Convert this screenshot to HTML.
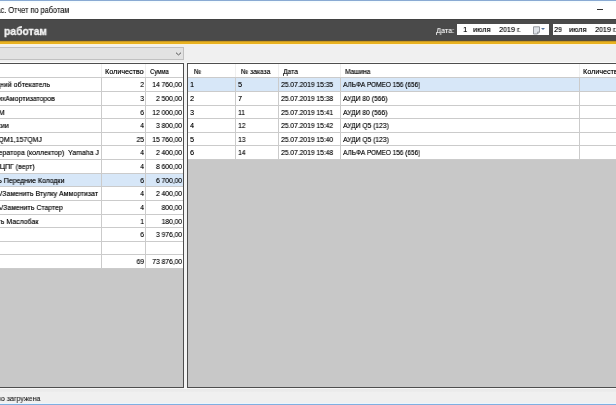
<!DOCTYPE html>
<html><head><meta charset="utf-8"><style>
*{margin:0;padding:0;box-sizing:border-box}
html,body{-webkit-font-smoothing:antialiased;width:616px;height:405px;overflow:hidden;background:#f0f0f0;font-family:"Liberation Sans",sans-serif;color:#1a1a1a}
div,span{position:absolute}
span{will-change:transform}
.t{color:#000;text-shadow:0.3px 0 0 rgba(0,0,0,0.5);font-size:7.2px;white-space:pre;line-height:10px;transform:scaleX(0.93);transform-origin:0 0}
.r{text-align:right;transform-origin:100% 0}
.hl{height:1px}
.vl{width:1px}
</style></head><body>

<div style="left:0;top:0;width:616px;height:1px;background:#8aaad3"></div>
<div style="left:0;top:1px;width:616px;height:18px;background:#ffffff"></div>
<div style="left:0;top:1px;width:616px;height:2px;background:linear-gradient(#f3fcff,#fafeff)"></div>
<span style="right:546.4px;top:5px;font-size:8.5px;transform:scaleX(0.865);transform-origin:100% 0;white-space:pre;line-height:10px;color:#111;text-shadow:0.2px 0 0 rgba(0,0,0,0.4)">ас. Отчет по работам</span>
<div style="left:597px;top:9px;width:6px;height:1px;background:#333"></div>
<div style="left:0;top:19px;width:616px;height:22px;background:#4a4a4a"></div>
<div style="left:0;top:19px;width:616px;height:1px;background:#424242"></div>
<span style="left:3.6px;top:23.9px;font-size:11.5px;font-weight:bold;-webkit-text-stroke:0.3px #f4f4f4;transform:scaleX(0.9);transform-origin:0 0;white-space:pre;line-height:14px;color:#f4f4f4">работам</span>
<span style="left:435.5px;top:26px;font-size:8px;transform:scaleX(0.91);transform-origin:0 0;white-space:pre;line-height:10px;color:#f2f2f2;text-shadow:0.3px 0 0 rgba(240,240,240,0.5)">Дата:</span>
<div style="left:457px;top:24px;width:92px;height:11.3px;background:#fff"></div>
<span class="t" style="left:462.5px;top:25px;font-size:7.7px">1</span>
<span class="t" style="left:472.5px;top:25px;font-size:7.7px">июля</span>
<span class="t" style="left:498.5px;top:25px;font-size:7.7px">2019 г.</span>
<svg style="position:absolute;left:532px;top:26px" width="9" height="9" viewBox="0 0 9 9"><path d="M1.5 0.8 H7.5 V6 L5.5 8 H1.5 Z" fill="#dfe3e8" stroke="#8c9096" stroke-width="0.9"/><path d="M7.5 6 H5.5 V8" fill="none" stroke="#8c9096" stroke-width="0.7"/></svg>
<div style="left:541px;top:28.3px;width:0;height:0;border-left:2.4px solid transparent;border-right:2.4px solid transparent;border-top:2.8px solid #4f6f9c"></div>
<div style="left:553px;top:24px;width:70px;height:11.3px;background:#fff"></div>
<span class="t" style="left:554px;top:25px;font-size:7.7px">29</span>
<span class="t" style="left:569px;top:25px;font-size:7.7px">июля</span>
<span class="t" style="left:594.5px;top:25px;font-size:7.7px">2019 г.</span>
<div style="left:0;top:40px;width:616px;height:1px;background:#5a4f36"></div>
<div style="left:0;top:41px;width:616px;height:1px;background:#c99a22"></div>
<div style="left:0;top:42px;width:616px;height:2px;background:#e9b220"></div>
<div style="left:0;top:44px;width:616px;height:1px;background:#fbf3dc"></div>
<div style="left:-2px;top:47px;width:186px;height:13px;background:#e2e2e2;border:1px solid #c0c0c0"></div>
<svg style="position:absolute;left:175px;top:51px" width="7" height="5" viewBox="0 0 7 5"><path d="M1 1.7 L3.2 3.7 Q3.5 4 3.8 3.7 L6 1.7" fill="none" stroke="#555" stroke-width="1"/></svg>
<div style="left:0;top:62px;width:616px;height:1px;background:#fbfbfb"></div>
<div style="left:184px;top:62px;width:3px;height:326px;background:#f4f4f4"></div>
<div style="left:-2px;top:63px;width:186px;height:325px;background:#c8c8c8;border:1px solid #4e4e4e"></div>
<div style="left:0;top:64px;width:183px;height:13.30px;background:#fff"></div>
<div style="left:0;top:77.30px;width:183px;height:190.82px;background:#fff"></div>
<div style="left:0;top:172.71px;width:183px;height:13.63px;background:#d7e7f8"></div>
<div class="hl" style="left:0;top:77.30px;width:183px;background:#cbcbcb"></div>
<div class="hl" style="left:0;top:90.93px;width:183px;background:#cbcbcb"></div>
<div class="hl" style="left:0;top:104.56px;width:183px;background:#cbcbcb"></div>
<div class="hl" style="left:0;top:118.19px;width:183px;background:#cbcbcb"></div>
<div class="hl" style="left:0;top:131.82px;width:183px;background:#cbcbcb"></div>
<div class="hl" style="left:0;top:145.45px;width:183px;background:#cbcbcb"></div>
<div class="hl" style="left:0;top:159.08px;width:183px;background:#cbcbcb"></div>
<div class="hl" style="left:0;top:172.71px;width:183px;background:#cbcbcb"></div>
<div class="hl" style="left:0;top:186.34px;width:183px;background:#cbcbcb"></div>
<div class="hl" style="left:0;top:199.97px;width:183px;background:#cbcbcb"></div>
<div class="hl" style="left:0;top:213.60px;width:183px;background:#cbcbcb"></div>
<div class="hl" style="left:0;top:227.23px;width:183px;background:#cbcbcb"></div>
<div class="hl" style="left:0;top:240.86px;width:183px;background:#cbcbcb"></div>
<div class="hl" style="left:0;top:254.49px;width:183px;background:#cbcbcb"></div>
<div class="hl" style="left:0;top:268.12px;width:183px;background:#cbcbcb"></div>
<div class="vl" style="left:101px;top:64px;height:13.30px;background:#efefef"></div>
<div class="vl" style="left:145px;top:64px;height:13.30px;background:#efefef"></div>
<div class="vl" style="left:101px;top:77.30px;height:190.82px;background:#cbcbcb"></div>
<div class="vl" style="left:145px;top:77.30px;height:190.82px;background:#cbcbcb"></div>
<span class="t" style="left:105.2px;top:66.5px;transform:scaleX(1.0)">Количество</span>
<span class="t" style="left:149.7px;top:66.5px;transform:scaleX(0.83)">Сумма</span>
<span class="t r" style="right:566.0px;top:80.30px;transform:scaleX(0.97)">Задний обтекатель</span>
<span class="t r" style="right:471.7px;top:80.30px">2</span>
<span class="t r" style="right:434.2px;top:80.30px">14 760,00</span>
<span class="t r" style="right:560.8px;top:93.93px;transform:scaleX(0.97)">ПереднихАмортизаторов</span>
<span class="t r" style="right:471.7px;top:93.93px">3</span>
<span class="t r" style="right:434.2px;top:93.93px">2 500,00</span>
<span class="t r" style="right:611.1px;top:107.56px;transform:scaleX(0.97)">ГРМ</span>
<span class="t r" style="right:471.7px;top:107.56px">6</span>
<span class="t r" style="right:434.2px;top:107.56px">12 000,00</span>
<span class="t r" style="right:607.1px;top:121.19px;transform:scaleX(0.97)">Трансмиссии</span>
<span class="t r" style="right:471.7px;top:121.19px">4</span>
<span class="t r" style="right:434.2px;top:121.19px">3 800,00</span>
<span class="t r" style="right:573.8px;top:134.82px;transform:scaleX(0.97)">Мотор 152QM1,157QMJ</span>
<span class="t r" style="right:471.7px;top:134.82px">25</span>
<span class="t r" style="right:434.2px;top:134.82px">15 760,00</span>
<span class="t r" style="right:517.2px;top:148.45px;transform:scaleX(0.97)">Щетки генератора (коллектор)  Yamaha J</span>
<span class="t r" style="right:471.7px;top:148.45px">4</span>
<span class="t r" style="right:434.2px;top:148.45px">2 400,00</span>
<span class="t r" style="right:581.2px;top:162.08px;transform:scaleX(0.97)">Поршень ЦПГ (верт)</span>
<span class="t r" style="right:471.7px;top:162.08px">4</span>
<span class="t r" style="right:434.2px;top:162.08px">8 600,00</span>
<span class="t r" style="right:551.4px;top:175.71px;transform:scaleX(0.97)">Снять/Установить Передние Колодки</span>
<span class="t r" style="right:471.7px;top:175.71px">6</span>
<span class="t r" style="right:434.2px;top:175.71px">6 700,00</span>
<span class="t r" style="right:518.1px;top:189.34px;transform:scaleX(0.97)">Снять/Заменить Втулку Аммортизат</span>
<span class="t r" style="right:471.7px;top:189.34px">4</span>
<span class="t r" style="right:434.2px;top:189.34px">2 400,00</span>
<span class="t r" style="right:553.5px;top:202.97px;transform:scaleX(0.97)">Снять/Заменить Стартер</span>
<span class="t r" style="right:471.7px;top:202.97px">4</span>
<span class="t r" style="right:434.2px;top:202.97px">800,00</span>
<span class="t r" style="right:577.5px;top:216.60px;transform:scaleX(0.97)">Заменить Маслобак</span>
<span class="t r" style="right:471.7px;top:216.60px">1</span>
<span class="t r" style="right:434.2px;top:216.60px">180,00</span>
<span class="t r" style="right:471.7px;top:230.23px">6</span>
<span class="t r" style="right:434.2px;top:230.23px">3 976,00</span>
<span class="t r" style="right:471.7px;top:257.49px">69</span>
<span class="t r" style="right:434.2px;top:257.49px">73 876,00</span>
<div style="left:187px;top:63px;width:440px;height:325px;background:#c8c8c8;border:1px solid #4e4e4e"></div>
<div style="left:188px;top:64px;width:430px;height:13.30px;background:#fff"></div>
<div style="left:188px;top:77.30px;width:430px;height:81.78px;background:#fff"></div>
<div style="left:188px;top:77.30px;width:430px;height:13.63px;background:#d7e7f8"></div>
<div class="hl" style="left:188px;top:77.30px;width:430px;background:#cbcbcb"></div>
<div class="hl" style="left:188px;top:90.93px;width:430px;background:#cbcbcb"></div>
<div class="hl" style="left:188px;top:104.56px;width:430px;background:#cbcbcb"></div>
<div class="hl" style="left:188px;top:118.19px;width:430px;background:#cbcbcb"></div>
<div class="hl" style="left:188px;top:131.82px;width:430px;background:#cbcbcb"></div>
<div class="hl" style="left:188px;top:145.45px;width:430px;background:#cbcbcb"></div>
<div class="hl" style="left:188px;top:159.08px;width:430px;background:#cbcbcb"></div>
<div class="vl" style="left:235px;top:64px;height:13.30px;background:#efefef"></div>
<div class="vl" style="left:235px;top:77.30px;height:81.78px;background:#cbcbcb"></div>
<div class="vl" style="left:278px;top:64px;height:13.30px;background:#efefef"></div>
<div class="vl" style="left:278px;top:77.30px;height:81.78px;background:#cbcbcb"></div>
<div class="vl" style="left:340px;top:64px;height:13.30px;background:#efefef"></div>
<div class="vl" style="left:340px;top:77.30px;height:81.78px;background:#cbcbcb"></div>
<div class="vl" style="left:579px;top:64px;height:13.30px;background:#efefef"></div>
<div class="vl" style="left:579px;top:77.30px;height:81.78px;background:#cbcbcb"></div>
<span class="t" style="left:193.7px;top:66.5px;transform:scaleX(0.93)">№</span>
<span class="t" style="left:240.5px;top:66.5px;transform:scaleX(0.93)">№ заказа</span>
<span class="t" style="left:283.2px;top:66.5px;transform:scaleX(0.93)">Дата</span>
<span class="t" style="left:344.5px;top:66.5px;transform:scaleX(0.91)">Машина</span>
<span class="t" style="left:583.3px;top:66.5px;transform:scaleX(1.0)">Количество</span>
<span class="t" style="left:189.5px;top:80.30px">1</span>
<span class="t" style="left:237.5px;top:80.30px">5</span>
<span class="t" style="left:280.8px;top:80.30px">25.07.2019 15:35</span>
<span class="t" style="left:342.5px;top:80.30px;transform:scaleX(0.9)">АЛЬФА РОМЕО 156 (656)</span>
<span class="t" style="left:189.5px;top:93.93px">2</span>
<span class="t" style="left:237.5px;top:93.93px">7</span>
<span class="t" style="left:280.8px;top:93.93px">25.07.2019 15:38</span>
<span class="t" style="left:342.5px;top:93.93px">АУДИ 80 (566)</span>
<span class="t" style="left:189.5px;top:107.56px">3</span>
<span class="t" style="left:237.5px;top:107.56px">11</span>
<span class="t" style="left:280.8px;top:107.56px">25.07.2019 15:41</span>
<span class="t" style="left:342.5px;top:107.56px">АУДИ 80 (566)</span>
<span class="t" style="left:189.5px;top:121.19px">4</span>
<span class="t" style="left:237.5px;top:121.19px">12</span>
<span class="t" style="left:280.8px;top:121.19px">25.07.2019 15:42</span>
<span class="t" style="left:342.5px;top:121.19px">АУДИ Q5 (123)</span>
<span class="t" style="left:189.5px;top:134.82px">5</span>
<span class="t" style="left:237.5px;top:134.82px">13</span>
<span class="t" style="left:280.8px;top:134.82px">25.07.2019 15:40</span>
<span class="t" style="left:342.5px;top:134.82px">АУДИ Q5 (123)</span>
<span class="t" style="left:189.5px;top:148.45px">6</span>
<span class="t" style="left:237.5px;top:148.45px">14</span>
<span class="t" style="left:280.8px;top:148.45px">25.07.2019 15:48</span>
<span class="t" style="left:342.5px;top:148.45px;transform:scaleX(0.9)">АЛЬФА РОМЕО 156 (656)</span>
<div style="left:0;top:388px;width:616px;height:1px;background:#f8f8f8"></div>
<div style="left:0;top:389px;width:616px;height:3px;background:linear-gradient(#e9e9e9,#ededed)"></div>
<span style="right:575.7px;top:393.8px;font-size:8px;-webkit-text-stroke:0.12px #222;transform:scaleX(0.88);transform-origin:100% 0;white-space:pre;line-height:10px;color:#222">успешно загружена</span>
<div style="left:0;top:403px;width:616px;height:1px;background:#eaf5fd"></div>
<div style="left:0;top:404px;width:616px;height:1px;background:#80afe0"></div>
</body></html>
